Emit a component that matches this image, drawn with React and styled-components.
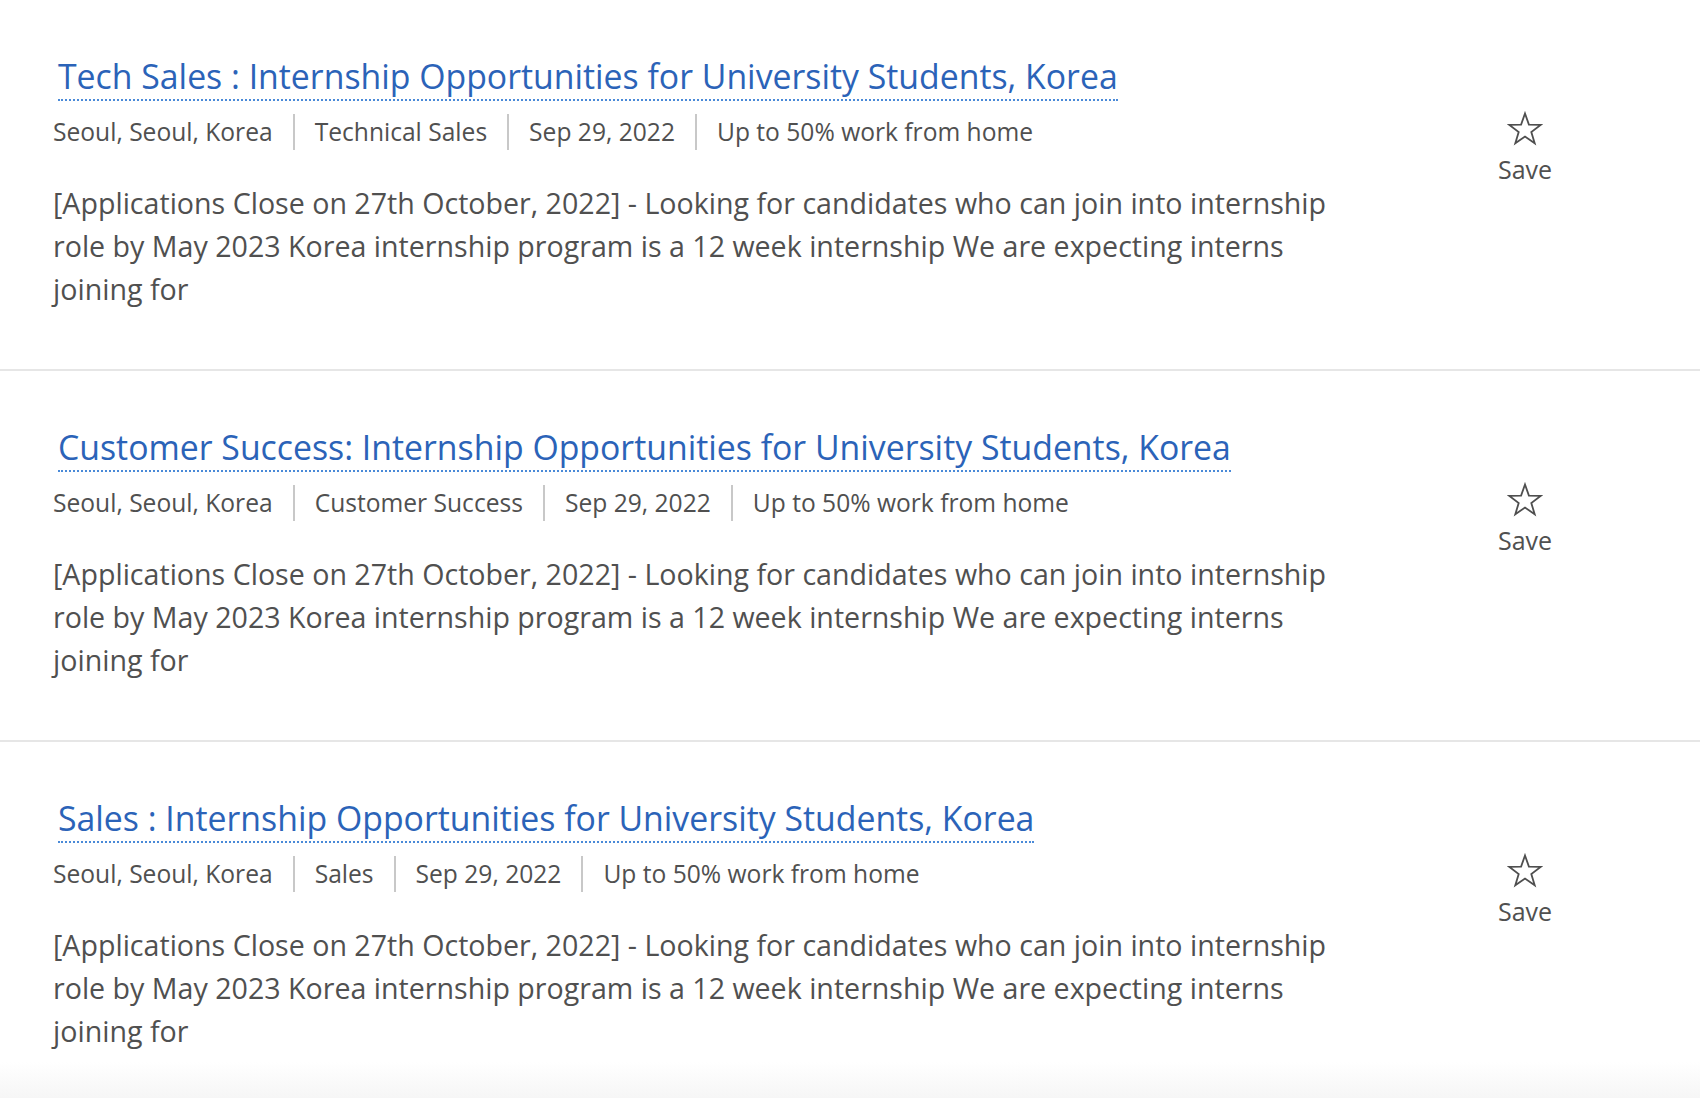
import React from 'react';
import styled, { createGlobalStyle } from 'styled-components';

const GlobalStyle = createGlobalStyle`
  html, body {
    margin: 0;
    padding: 0;
    background: #ffffff;
  }
  body {
    font-family: 'Open Sans', 'Noto Sans', 'Liberation Sans', sans-serif;
    color: #505050;
  }
`;

const Page = styled.div`
  width: 100%;
  height: 1098px;
  overflow: hidden;
  position: relative;
  background: #fff;
`;

const List = styled.ul`
  list-style: none;
  margin: 0;
  padding: 0;
`;

const JobRow = styled.li`
  display: grid;
  grid-template-columns: 1fr 150px;
  height: 371px;
  box-sizing: border-box;
  padding: 53px 100px 0 53px;
  border-top: 2px solid #e6e6e6;

  &:first-child {
    height: 369px;
    border-top: none;
  }
`;

const Main = styled.div`
  display: flex;
  flex-direction: column;
`;

const Title = styled.a`
  align-self: flex-start;
  margin-left: 5px;
  font-size: 33.8px;
  line-height: 46px;
  color: #2b63b8;
  text-decoration: none;
  border-bottom: 2px dotted #4a8ad8;
`;

const Meta = styled.div`
  display: flex;
  align-items: center;
  margin-top: 13px;
`;

const MetaItem = styled.span`
  font-size: 24.6px;
  line-height: 36px;
  padding: 0 20px;
  border-left: 2px solid #c8c8c8;

  &:first-child {
    padding-left: 0;
    border-left: none;
  }
`;

const Description = styled.p`
  margin: 31px 0 0;
  max-width: 1290px;
  font-size: 28.6px;
  line-height: 43px;
  color: #505050;
`;

const SaveButton = styled.button`
  justify-self: center;
  align-self: start;
  margin-top: 58px;
  padding: 0;
  border: none;
  background: none;
  display: flex;
  flex-direction: column;
  align-items: center;
  gap: 7px;
  cursor: pointer;
  font-family: inherit;
  color: #505050;
`;

const SaveLabel = styled.span`
  font-size: 25px;
  line-height: 30px;
`;

const BottomFade = styled.div`
  position: absolute;
  left: 0;
  right: 0;
  bottom: 0;
  height: 36px;
  background: linear-gradient(to bottom, rgba(246, 246, 246, 0), rgba(246, 246, 246, 1));
  pointer-events: none;
`;

const StarIcon = () => (
  <svg width="36" height="36" viewBox="0 0 36 36" fill="none">
    <path
      d="M18 2.5 L21.9 13.6 L33.6 13.9 L24.3 21 L27.7 32.3 L18 25.6 L8.3 32.3 L11.7 21 L2.4 13.9 L14.1 13.6 Z"
      stroke="#4f4f4f"
      strokeWidth="1.8"
      strokeLinejoin="miter"
    />
  </svg>
);

const description =
  '[Applications Close on 27th October, 2022] - Looking for candidates who can join into internship role by May 2023 Korea internship program is a 12 week internship We are expecting interns joining for';

const jobs = [
  { title: 'Tech Sales : Internship Opportunities for University Students, Korea', team: 'Technical Sales' },
  { title: 'Customer Success: Internship Opportunities for University Students, Korea', team: 'Customer Success' },
  { title: 'Sales : Internship Opportunities for University Students, Korea', team: 'Sales' },
];

export default function App() {
  return (
    <Page>
      <GlobalStyle />
      <List>
        {jobs.map((job) => (
          <JobRow key={job.title}>
            <Main>
              <Title href="#">{job.title}</Title>
              <Meta>
                <MetaItem>Seoul, Seoul, Korea</MetaItem>
                <MetaItem>{job.team}</MetaItem>
                <MetaItem>Sep 29, 2022</MetaItem>
                <MetaItem>Up to 50% work from home</MetaItem>
              </Meta>
              <Description>{description}</Description>
            </Main>
            <SaveButton type="button">
              <StarIcon />
              <SaveLabel>Save</SaveLabel>
            </SaveButton>
          </JobRow>
        ))}
      </List>
      <BottomFade />
    </Page>
  );
}
